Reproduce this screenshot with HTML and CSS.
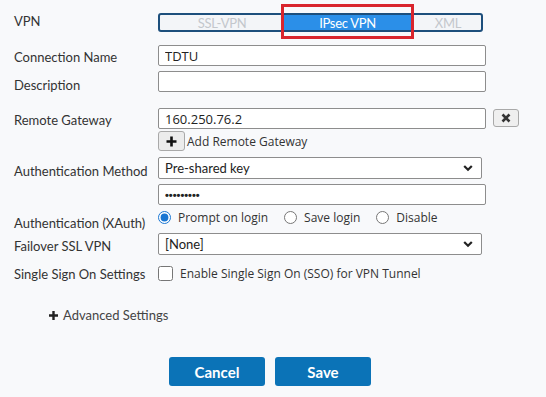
FILE: index.html
```html
<!DOCTYPE html>
<html lang="en">
<head>
  <meta charset="UTF-8">
  <title>VPN Connection</title>
  <link rel="stylesheet" href="styles.css">
</head>
<body>

  <div class="form">
    <!-- VPN type -->
    <div class="row row-vpn">
      <label class="lbl">VPN</label>
      <div class="toggle">
        <span class="seg seg-ssl">SSL-VPN</span>
        <span class="seg seg-ipsec">IPsec VPN</span>
        <span class="seg seg-xml">XML</span>
        <div class="mark"></div>
      </div>
    </div>

    <div class="row row-name">
      <label class="lbl">Connection Name</label>
      <input class="field" type="text" value="TDTU">
    </div>

    <div class="row row-desc">
      <label class="lbl">Description</label>
      <input class="field" type="text">
    </div>

    <div class="row row-gw">
      <label class="lbl">Remote Gateway</label>
      <input class="field" type="text" value="160.250.76.2">
      <button class="btn-del">
        <svg width="10" height="10" viewBox="0 0 10 10"><path d="M1.5 1.5 L8.5 8.5 M8.5 1.5 L1.5 8.5" stroke="#333" stroke-width="2.6"/></svg>
      </button>
    </div>

    <div class="row row-add">
      <span></span>
      <div class="add">
        <button class="btn-add">
          <svg width="11" height="11" viewBox="0 0 11 11"><path d="M5.5 0.5 V10.5 M0.5 5.5 H10.5" stroke="#111" stroke-width="2.6"/></svg>
        </button>
        <span>Add Remote Gateway</span>
      </div>
    </div>

    <div class="row row-auth">
      <label class="lbl">Authentication Method</label>
      <div class="sel">
        <select>
          <option>Pre-shared key</option>
        </select>
        <svg class="chev" width="10" height="8" viewBox="0 0 10 8"><path d="M1.2 2 L5 5.8 L8.8 2" fill="none" stroke="#222" stroke-width="2.2"/></svg>
      </div>
    </div>

    <div class="row row-pass">
      <span></span>
      <input class="field pass" type="password" value="password1">
    </div>

    <div class="row row-xauth">
      <label class="lbl">Authentication (XAuth)</label>
      <div class="radios">
        <label class="opt"><input type="radio" name="xauth" checked> Prompt on login</label>
        <label class="opt"><input type="radio" name="xauth"> Save login</label>
        <label class="opt"><input type="radio" name="xauth"> Disable</label>
      </div>
    </div>

    <div class="row row-fail">
      <label class="lbl">Failover SSL VPN</label>
      <div class="sel">
        <select>
          <option>[None]</option>
        </select>
        <svg class="chev" width="10" height="8" viewBox="0 0 10 8"><path d="M1.2 2 L5 5.8 L8.8 2" fill="none" stroke="#222" stroke-width="2.2"/></svg>
      </div>
    </div>

    <div class="row row-sso">
      <label class="lbl">Single Sign On Settings</label>
      <label class="opt check"><input type="checkbox"> Enable Single Sign On (SSO) for VPN Tunnel</label>
    </div>

    <div class="advanced">
      <svg width="9" height="9" viewBox="0 0 9 9"><path d="M4.5 0 V9 M0 4.5 H9" stroke="#222" stroke-width="2.4"/></svg>
      <span>Advanced Settings</span>
    </div>

    <div class="actions">
      <button class="btn-primary">Cancel</button>
      <button class="btn-primary">Save</button>
    </div>
  </div>

</body>
</html>
```

FILE: styles.css
```css
body {
  margin: 0;
  padding: 0 0 0 14px;
  background: #f8f9fb;
  font-family: Lato, 'Liberation Sans', sans-serif;
  font-size: 13px;
  color: #333;
}

.form {
  display: flex;
  flex-direction: column;
}

.row {
  display: grid;
  grid-template-columns: 144px 328px auto;
  align-items: start;
}

.lbl {
  line-height: 16px;
  white-space: nowrap;
}

/* vertical rhythm of the rows */
.row-vpn { margin-top: 13px; }
.row-name { margin-top: 13px; }
.row-name .lbl { padding-top: 4px; }
.row-desc { margin-top: 5px; }
.row-desc .lbl { padding-top: 6px; }
.row-gw { margin-top: 15px; }
.row-gw .lbl { padding-top: 4px; }
.row-add { margin-top: 2px; }
.row-auth { margin-top: 6px; }
.row-auth .lbl { padding-top: 6px; }
.row-pass { margin-top: 5px; }
.row-xauth { margin-top: 5px; }
.row-xauth .lbl { padding-top: 5px; }
.row-fail { margin-top: 2px; }
.row-fail .lbl { padding-top: 5px; }
.row-sso { margin-top: 10px; }
.row-sso .lbl { padding-top: 1px; }

/* toggle */
.toggle {
  position: relative;
  display: flex;
  width: 325px;
  height: 19px;
  box-sizing: border-box;
  border: 2px solid #1d4f7c;
  border-radius: 3px;
  background: #f3f5f8;
}

.seg {
  display: flex;
  align-items: center;
  justify-content: center;
  color: #c3c7cc;
  font-size: 13px;
  letter-spacing: -0.3px;
}

.seg-ssl { width: 124px; }
.seg-ipsec { width: 127px; background: #2b8fe8; color: #fff; }
.seg-xml { flex: 1; padding-left: 4px; }

.mark {
  position: absolute;
  left: 121px;
  top: -11px;
  width: 133px;
  height: 35px;
  box-sizing: border-box;
  border: 3px solid #d9252d;
}

/* inputs */
.field {
  width: 328px;
  height: 21px;
  box-sizing: border-box;
  margin: 0;
  padding: 0 6px;
  border: 1px solid #8d8d8d;
  border-radius: 2px;
  background: #fff;
  font-family: 'Open Sans', 'Noto Sans', sans-serif;
  font-size: 13px;
  color: #222;
  outline: none;
}

.pass {
  font-family: 'Liberation Sans', sans-serif;
  font-size: 11px;
  letter-spacing: 0;
  font-weight: bold;
}

.btn-del {
  margin: 1px 0 0 7px;
  width: 26px;
  height: 18px;
  padding: 0;
  border: 1px solid #a9a9a9;
  border-radius: 3px;
  background: #efefef;
  display: flex;
  align-items: center;
  justify-content: center;
}

.add {
  display: flex;
  align-items: center;
  font-family: 'Open Sans', 'Noto Sans', sans-serif;
  font-size: 12px;
  color: #333;
}

.btn-add {
  width: 27px;
  height: 20px;
  margin: 0 2px 0 0;
  padding: 0;
  border: 1px solid #a9a9a9;
  border-radius: 3px;
  background: #ececec;
  display: flex;
  align-items: center;
  justify-content: center;
}

/* selects */
.sel {
  position: relative;
  width: 324px;
}

.sel select {
  appearance: none;
  width: 324px;
  height: 22px;
  box-sizing: border-box;
  margin: 0;
  padding: 0 6px;
  border: 1px solid #8d8d8d;
  border-radius: 2px;
  background: #fff;
  font-family: Lato, sans-serif;
  font-size: 13px;
  color: #222;
}

.chev {
  position: absolute;
  right: 9px;
  top: 7px;
}

/* radios and checkbox */
.radios {
  display: flex;
  gap: 16px;
  height: 15px;
  align-items: center;
}

.opt {
  display: flex;
  align-items: center;
  gap: 7px;
  font-family: 'Open Sans', 'Noto Sans', sans-serif;
  font-size: 12px;
  color: #333;
  white-space: nowrap;
}

.opt input[type="radio"] {
  margin: 0;
  width: 13px;
  height: 13px;
  accent-color: #1976d2;
}

.check input {
  margin: 0;
  width: 15px;
  height: 15px;
}

.check {
  grid-column: span 2;
}

/* advanced */
.advanced {
  margin: 25px 0 0 35px;
  display: flex;
  align-items: center;
  gap: 5px;
  line-height: 16px;
  color: #444;
}

/* buttons */
.actions {
  margin: 34px 0 0 155px;
  display: flex;
  gap: 10px;
}

.btn-primary {
  width: 96px;
  height: 29px;
  border: none;
  border-radius: 3px;
  background: #0b73b7;
  color: #fff;
  font-family: Lato, sans-serif;
  font-weight: bold;
  font-size: 15px;
}
```
